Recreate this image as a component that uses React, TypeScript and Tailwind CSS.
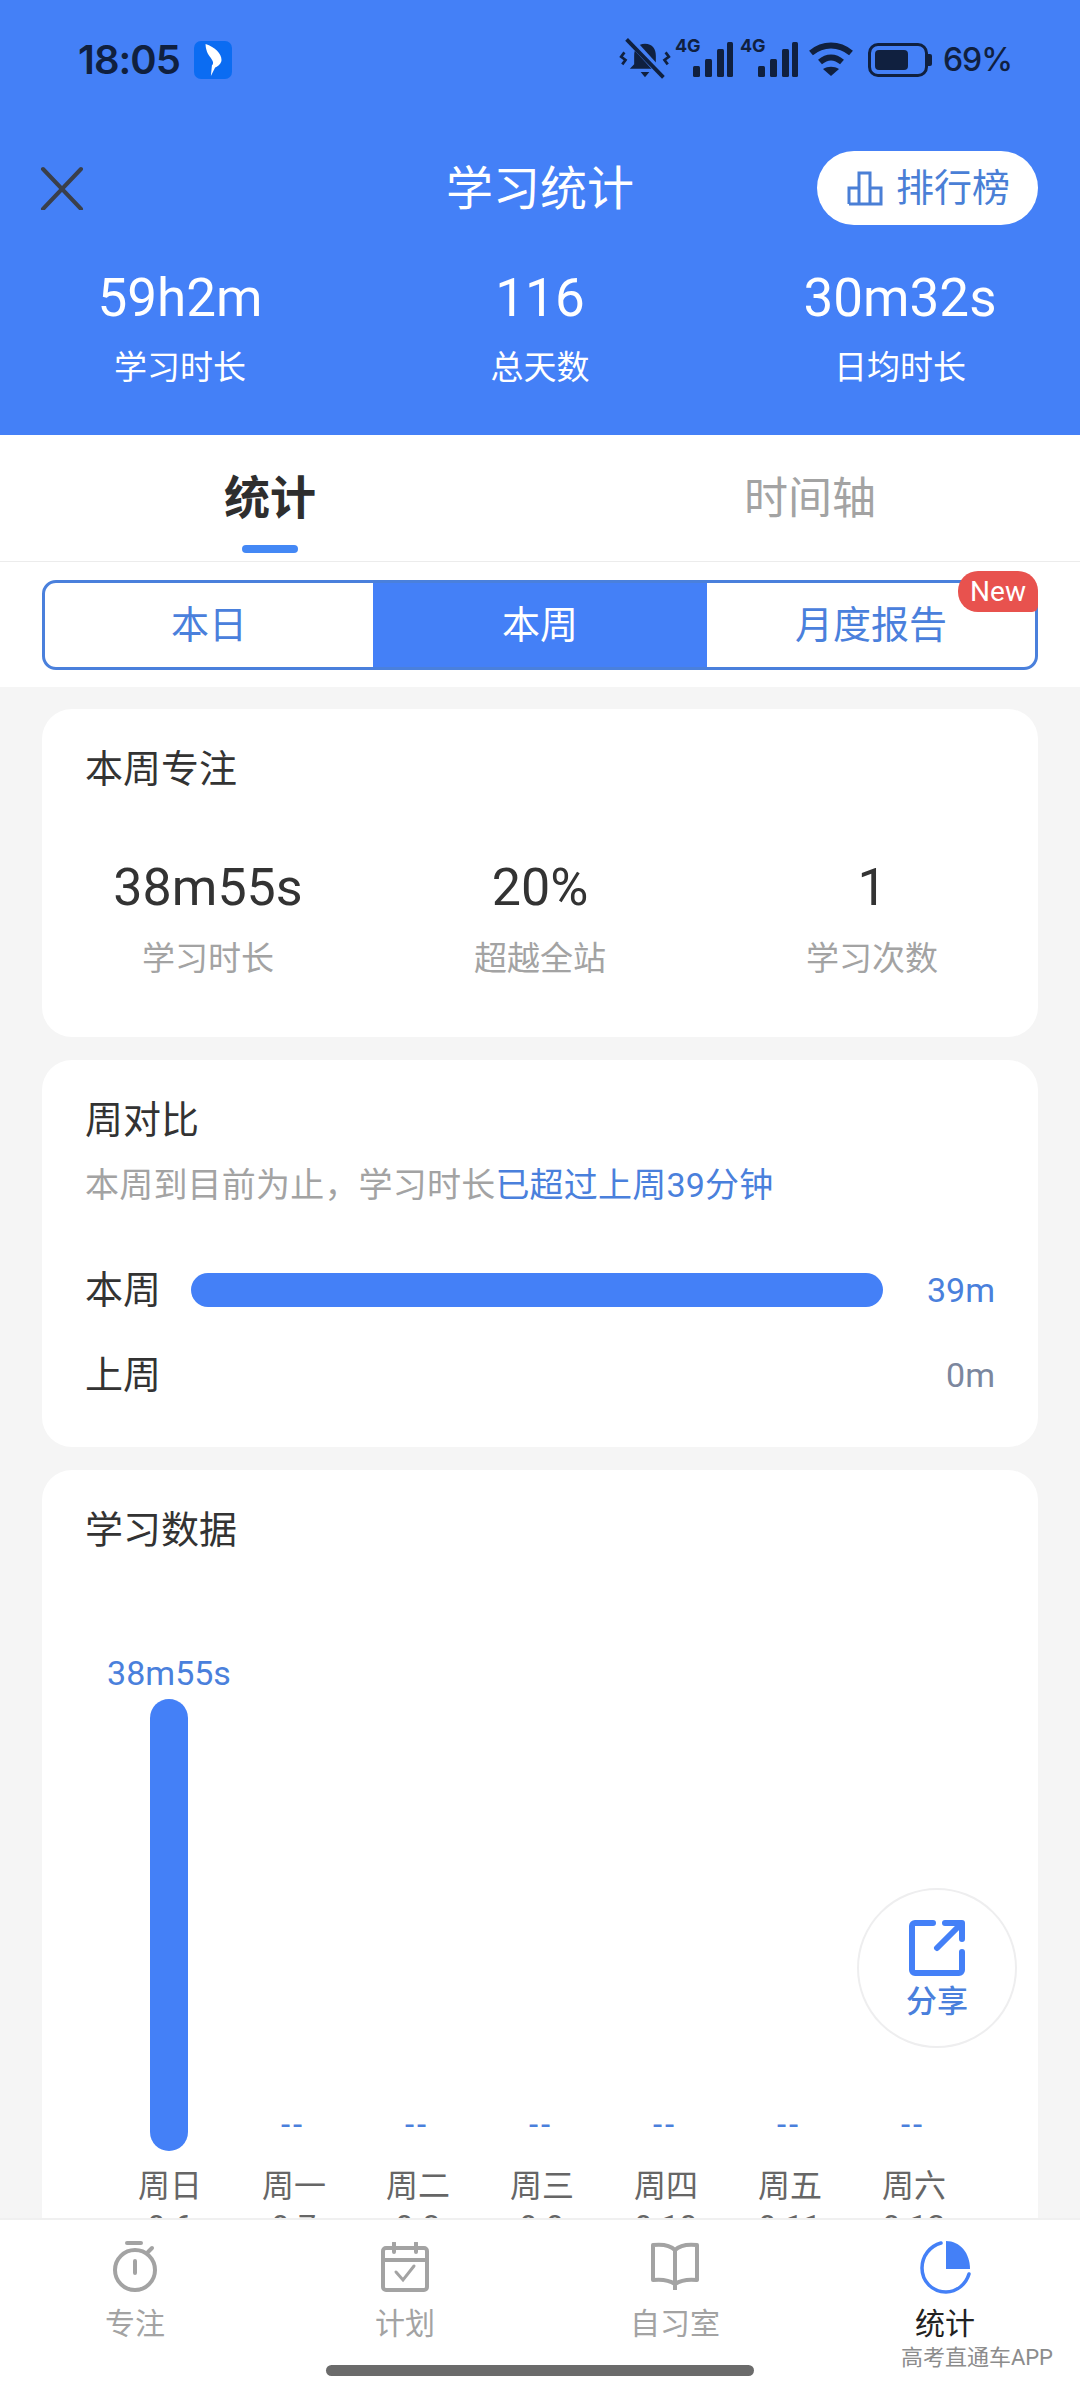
const FONT = "font-['Roboto','Noto_Sans_CJK_SC',sans-serif]";

function StatusBar() {
  return (
    <div className="h-[110px] pl-[78px] pr-[68px] pt-[38px] flex items-start justify-between text-[#10203f]">
      <div className="flex items-center gap-[14px]">
        <span className="text-[40px] leading-[44px] font-semibold font-['Inter',sans-serif] tracking-[-1px]">18:05</span>
        <div className="w-[38px] h-[38px] rounded-[7px] bg-[#0b6cf2] flex items-center justify-center">
          <svg width="24" height="34" viewBox="0 0 22 32" fill="#fff">
            <path d="M4 1c9 3 15 9 15 15 0 3-3 6-6 7l-4 8 1-10c2-2 1-4-1-7C6 11 4 6 4 1z" />
          </svg>
        </div>
      </div>
      <div className="flex items-center gap-[5px] h-[44px]">
        <svg className="mr-[-1px]" width="52" height="46" viewBox="0 0 48 42" fill="none" stroke="#10203f">
          <path d="M24 6c7 0 10 5 10 11v8l4 4H10l4-4v-8c0-6 3-11 10-11z" fill="#10203f" stroke="none" />
          <path d="M20 32h8l-4 5z" fill="#10203f" stroke="none" />
          <path d="M9 1l32 35" strokeWidth="7" stroke="#4480f7" />
          <path d="M7 2l34 35" strokeWidth="3.5" />
          <path d="M5 14l-3 4 4 3-3 4M43 14l3 4-4 3 3 4" strokeWidth="2.5" />
        </svg>
        <Signal />
        <Signal />
        <svg className="ml-[3px]" width="46" height="36" viewBox="0 0 46 36" fill="none" stroke="#10203f" strokeWidth="6">
          <path d="M3 11c12-10 28-10 40 0" />
          <path d="M12 20c7-6 15-6 22 0" />
          <path d="M23 34l-8-7c5-3 11-3 16 0z" fill="#10203f" stroke="none" />
        </svg>
        <div className="flex items-center ml-[9px] mr-[6px]">
          <div className="w-[60px] h-[34px] rounded-[10px] border-[3px] border-[#10203f] p-[4px]">
            <div className="w-[33px] h-full rounded-[4px] bg-[#10203f]" />
          </div>
          <div className="w-[4px] h-[12px] rounded-r-[2px] bg-[#10203f]" />
        </div>
        <span className="text-[32px] leading-[44px] font-medium font-['Inter',sans-serif] tracking-[-1px]">69%</span>
      </div>
    </div>
  );
}

function Signal() {
  return (
    <div className="relative w-[60px] h-[38px]">
      <span className="absolute left-0 top-[-5px] text-[18px] leading-[20px] font-bold font-['Inter',sans-serif]">4G</span>
      <svg className="absolute left-0 top-0" width="60" height="38" viewBox="0 0 60 38" fill="#10203f">
        <rect x="18" y="25" width="7" height="11" rx="1.5" />
        <rect x="30" y="18" width="7" height="18" rx="1.5" />
        <rect x="42" y="8" width="7" height="28" rx="1.5" />
        <rect x="52" y="1" width="6" height="35" rx="1.5" />
      </svg>
    </div>
  );
}

function HeaderStat({ value, label }: { value: string; label: string }) {
  return (
    <div className="flex flex-col items-center text-white">
      <div className="text-[53px] leading-[60px]">{value}</div>
      <div className="text-[33px] leading-[44px] mt-[18px]">{label}</div>
    </div>
  );
}

function CardStat({ value, label }: { value: string; label: string }) {
  return (
    <div className="flex flex-col items-center">
      <div className="text-[52px] leading-[60px] text-[#333333]">{value}</div>
      <div className="text-[33px] leading-[44px] mt-[19px] text-[#a3a3a3]">{label}</div>
    </div>
  );
}

const days = [
  { name: "周日", date: "9.6" },
  { name: "周一", date: "9.7" },
  { name: "周二", date: "9.8" },
  { name: "周三", date: "9.9" },
  { name: "周四", date: "9.10" },
  { name: "周五", date: "9.11" },
  { name: "周六", date: "9.12" },
];

function NavItem({ label, active, children }: { label: string; active?: boolean; children: React.ReactNode }) {
  return (
    <div className="flex-1 flex flex-col items-center">
      <div className="h-[62px] flex items-center justify-center">{children}</div>
      <div className={`text-[30px] leading-[40px] mt-[6px] ${active ? "text-[#222222]" : "text-[#a3a3a3]"}`}>{label}</div>
    </div>
  );
}

export default function App() {
  return (
    <div className={`relative w-[1080px] h-[2400px] overflow-hidden flex flex-col bg-[#f5f5f5] ${FONT}`}>
      {/* Header */}
      <div className="bg-[#4480f7] h-[435px] shrink-0">
        <StatusBar />
        <div className="relative h-[96px] mt-[31px] flex items-center justify-center">
          <svg className="absolute left-[40px] top-[25px]" width="44" height="44" viewBox="0 0 44 44" stroke="#3a3f4a" strokeWidth="4" strokeLinecap="round">
            <path d="M3 3l38 40M41 3L3 43" />
          </svg>
          <div className="text-[47px] leading-[60px] text-white">学习统计</div>
          <div className="absolute left-[817px] top-[10px] w-[221px] h-[74px] rounded-full bg-white flex items-center justify-center gap-[13px] pl-[2px] text-[#4a7fd6]">
            <svg width="36" height="36" viewBox="0 0 36 36" fill="none" stroke="#4a7fd6" strokeWidth="3">
              <path d="M2 34V18h10v16M12 34V3h11v31M23 34V18h11v16zM2 34h32" />
            </svg>
            <span className="text-[38px] leading-[48px]">排行榜</span>
          </div>
        </div>
        <div className="grid grid-cols-3 mt-[31px]">
          <HeaderStat value="59h2m" label="学习时长" />
          <HeaderStat value="116" label="总天数" />
          <HeaderStat value="30m32s" label="日均时长" />
        </div>
      </div>

      {/* Tabs */}
      <div className="bg-white h-[127px] shrink-0 border-b border-[#ececec] grid grid-cols-2">
        <div className="relative flex justify-center pt-[33px]">
          <span className="text-[46px] leading-[60px] font-bold text-[#2e2e2e]">统计</span>
          <div className="absolute left-[242px] top-[110px] w-[56px] h-[8px] rounded-full bg-[#4488f5]" />
        </div>
        <div className="flex justify-center pt-[34px]">
          <span className="text-[44px] leading-[60px] text-[#a3a3a3]">时间轴</span>
        </div>
      </div>

      {/* Range switch */}
      <div className="bg-white h-[125px] shrink-0 px-[42px] pt-[18px]">
        <div className="relative h-[90px] rounded-[14px] border-[3px] border-[#4a80dc] grid grid-cols-[328px_334px_1fr] text-[38px]">
          <div className="flex items-center justify-center text-[#4a80dc]">本日</div>
          <div className="flex items-center justify-center bg-[#4480f7] text-white">本周</div>
          <div className="flex items-center justify-center text-[#4a80dc]">月度报告</div>
          <div className="absolute right-[-3px] top-[-12px] w-[80px] h-[41px] rounded-t-[20px] rounded-bl-[20px] rounded-br-[6px] bg-[#e8524e] text-white text-[28px] leading-[41px] text-center">
            New
          </div>
        </div>
      </div>

      {/* Scroll content */}
      <div className="flex-1 min-h-0 overflow-hidden px-[42px] pt-[22px] flex flex-col gap-[23px]">
        <div className="bg-white rounded-[30px] h-[328px] shrink-0 px-[43px] pt-[36px]">
          <div className="text-[38px] leading-[48px] text-[#333333]">本周专注</div>
          <div className="grid grid-cols-3 -mx-[43px] mt-[65px]">
            <CardStat value="38m55s" label="学习时长" />
            <CardStat value="20%" label="超越全站" />
            <CardStat value="1" label="学习次数" />
          </div>
        </div>

        <div className="bg-white rounded-[30px] h-[387px] shrink-0 px-[43px] pt-[36px]">
          <div className="text-[38px] leading-[48px] text-[#333333]">周对比</div>
          <div className="text-[34px] leading-[44px] mt-[19px] tracking-[0.2px] text-[#a3a3a3]">
            本周到目前为止，学习时长<span className="text-[#4a80dc]">已超过上周39分钟</span>
          </div>
          <div className="flex items-center mt-[53px] h-[60px]">
            <span className="w-[106px] shrink-0 text-[38px] text-[#333333]">本周</span>
            <div className="w-[692px] h-[34px] rounded-full bg-[#4480f7]" />
            <span className="flex-1 text-right text-[34px] text-[#4a80dc]">39m</span>
          </div>
          <div className="flex items-center mt-[25px] h-[60px]">
            <span className="w-[106px] shrink-0 text-[38px] text-[#333333]">上周</span>
            <span className="flex-1 text-right text-[34px] text-[#7c879e]">0m</span>
          </div>
        </div>

        <div className="relative bg-white rounded-[30px] h-[800px] shrink-0 px-[43px] pt-[36px]">
          <div className="text-[38px] leading-[48px] text-[#333333]">学习数据</div>
          <div className="flex mt-[77px] -mx-[43px] pl-[65px]">
            {days.map((d, i) => (
              <div key={d.name} className="w-[124px] flex flex-col items-center">
                <div className="h-[520px] flex flex-col items-center justify-end">
                  {i === 0 ? (
                    <>
                      <div className="text-[34px] leading-[44px] text-[#4a80dc] mb-[4px] whitespace-nowrap">38m55s</div>
                      <div className="w-[38px] h-[452px] rounded-full bg-[#4480f7]" />
                    </>
                  ) : (
                    <div className="text-[33px] leading-[30px] tracking-[3px] text-[#4a80dc] mb-[11px]">--</div>
                  )}
                </div>
                <div className="text-[32px] leading-[44px] mt-[13px] ml-[2px] text-[#666666] whitespace-nowrap">{d.name}</div>
                <div className="text-[32px] leading-[36px] ml-[2px] text-[#666666]">{d.date}</div>
              </div>
            ))}
          </div>
          {/* Share button */}
          <div className="absolute left-[815px] top-[418px] w-[160px] h-[160px] rounded-full bg-white border-[2px] border-[#eeeeef] flex flex-col items-center pt-[30px]">
            <svg width="56" height="56" viewBox="0 0 56 56" fill="none" stroke="#4480f7" strokeWidth="6" strokeLinecap="round" strokeLinejoin="round">
              <path d="M24 3H6a3 3 0 0 0-3 3v44a3 3 0 0 0 3 3h44a3 3 0 0 0 3-3V32" />
              <path d="M28 28L52 4M36 3h17v16" />
            </svg>
            <div className="text-[31px] leading-[36px] mt-[8px] font-medium text-[#4a80dc]">分享</div>
          </div>
        </div>
      </div>

      {/* Bottom nav */}
      <div className="absolute left-0 right-0 bottom-0 h-[182px] bg-white border-t-[2px] border-[#f0f0f0] flex pt-[16px]">
        <NavItem label="专注">
          <svg width="46" height="52" viewBox="0 0 46 52" fill="none" stroke="#a3a3a3" strokeWidth="4" strokeLinecap="round">
            <path d="M15 2h14" />
            <circle cx="23" cy="29" r="20" />
            <path d="M23 20v12M36 11l4-4" />
          </svg>
        </NavItem>
        <NavItem label="计划">
          <svg width="48" height="50" viewBox="0 0 48 50" fill="none" stroke="#a3a3a3" strokeWidth="4" strokeLinecap="round">
            <rect x="2" y="6" width="44" height="42" rx="3" />
            <path d="M2 18h44M13 1v9M35 1v9" />
            <path d="M15 30l7 8 11-14" strokeWidth="3" />
          </svg>
        </NavItem>
        <NavItem label="自习室">
          <svg width="50" height="50" viewBox="0 0 50 50" fill="none" stroke="#a3a3a3" strokeWidth="4" strokeLinejoin="round">
            <path d="M25 8C20 3 12 2 3 3v35c9-1 16 0 22 4 6-4 13-5 22-4V3c-9-1-17 0-22 5zM25 8v34l0 6" />
          </svg>
        </NavItem>
        <NavItem label="统计" active>
          <svg width="52" height="54" viewBox="0 0 52 54" fill="none">
            <path d="M22 3C11 6 3 16 3 28c0 13 10 24 24 24 11 0 20-8 23-18" stroke="#4480f7" strokeWidth="3.5" strokeLinecap="round" />
            <path d="M27 1c14 0 24 12 24 28H27z" fill="#4480f7" />
          </svg>
        </NavItem>
        <div className="absolute right-[27px] top-[123px] text-[22px] leading-[30px] text-[#8c8c8c]">高考直通车APP</div>
        <div className="absolute left-[326px] top-[145px] w-[428px] h-[11px] rounded-full bg-[#6b6b6b]" />
      </div>
    </div>
  );
}
